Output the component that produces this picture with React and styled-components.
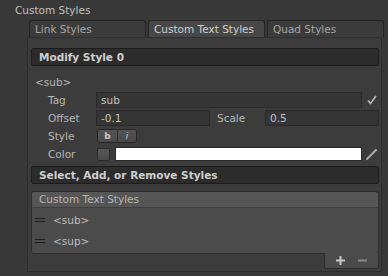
import React from "react";
import styled, { createGlobalStyle } from "styled-components";

const Global = createGlobalStyle`
  html, body { margin: 0; padding: 0; background: #383838; }
  body { font-family: "DejaVu Sans", Verdana, sans-serif; font-size: 10.5px; color: #bcbcbc; }
  * { box-sizing: border-box; }
`;

const Page = styled.div`
  width: 388px;
  height: 276px;
  background: #383838;
  padding: 3px 0 0 15px;
  display: flex;
  flex-direction: column;
  overflow: hidden;
`;

const Title = styled.div`
  height: 17px;
  line-height: 15px;
  color: #c0c0c0;
`;

const Section = styled.div`
  margin-left: 12px;
  width: 356px;
  display: flex;
  flex-direction: column;
`;

const TabBar = styled.div`
  display: flex;
  padding-left: 2px;
  gap: 2px;
  height: 17px;
`;

const Tab = styled.div`
  flex: 0 0 117px;
  height: 17px;
  padding-left: 5px;
  line-height: 16px;
  border: 1px solid #262626;
  border-bottom: none;
  border-radius: 3px 3px 0 0;
  background: ${(p) => (p.$active ? "#474747" : "#3b3b3b")};
  color: ${(p) => (p.$active ? "#cfcfcf" : "#a6a6a6")};
  white-space: nowrap;
  overflow: hidden;
`;

const Panel = styled.div`
  width: 355px;
  height: 235px;
  background: #3c3c3c;
  border: 1px solid #2c2c2c;
  border-top-color: #303030;
  padding: 10px 2px 0 3px;
  display: flex;
  flex-direction: column;
`;

const Header = styled.div`
  height: 18px;
  background: #2c2c2c;
  border: 1px solid #1c1c1c;
  border-radius: 2px;
  padding-left: 7px;
  line-height: 16px;
  font-weight: bold;
  color: #cfcfcf;
  margin-top: ${(p) => p.$mt || 0}px;
`;

const Sub = styled.div`
  height: 18px;
  margin-top: 7px;
  padding-left: 4px;
  line-height: 18px;
  color: #b6b6b6;
`;

const Row = styled.div`
  display: flex;
  align-items: center;
  height: 18px;
  padding-left: 17px;
`;

const Label = styled.div`
  width: 48px;
  margin-left: ${(p) => p.$ml || 0}px;
  color: #b6b6b6;
  flex: none;
`;

const Field = styled.div`
  width: ${(p) => p.$w}px;
  height: 16px;
  background: #353535;
  border: 1px solid #2a2a2a;
  padding-left: 4px;
  line-height: 14px;
  color: #c4c4c4;
  flex: none;
`;

const Side = styled.div`
  margin-left: 3px;
  width: 14px;
  height: 14px;
  display: flex;
  align-items: center;
  justify-content: center;
  flex: none;
`;

const BtnGroup = styled.div`
  display: flex;
  height: 14px;
  margin-left: 1px;
  border: 1px solid #262626;
  border-radius: 3px;
  overflow: hidden;
`;

const StyleBtn = styled.div`
  width: 19px;
  background: linear-gradient(#555, #484848);
  color: #c8c8c8;
  font-size: 9px;
  font-weight: ${(p) => (p.$bold ? "bold" : "normal")};
  font-style: ${(p) => (p.$italic ? "italic" : "normal")};
  text-align: center;
  line-height: 12px;
  & + & { border-left: 1px solid #2c2c2c; }
`;

const Toggle = styled.div`
  width: 13px;
  height: 13px;
  margin-left: 1px;
  border: 1px solid #2a2a2a;
  border-radius: 2px;
  background: linear-gradient(#585858, #4a4a4a);
  margin-right: 5px;
  flex: none;
`;

const Swatch = styled.div`
  width: 247px;
  height: 14px;
  background: #fff;
  border: 1px solid #2a2a2a;
  flex: none;
`;

const ListBox = styled.div`
  margin-top: 7px;
  display: flex;
  flex-direction: column;
`;

const ListHead = styled.div`
  height: 16px;
  background: #565656;
  border: 1px solid #2e2e2e;
  border-bottom: none;
  border-radius: 3px 3px 0 0;
  padding-left: 7px;
  line-height: 15px;
  color: #b4b4b4;
`;

const ListBody = styled.div`
  height: 47px;
  background: #4b4b4b;
  border: 1px solid #2e2e2e;
  border-top: 1px solid #404040;
  border-radius: 0 0 3px 3px;
  padding-top: 1px;
`;

const Item = styled.div`
  display: flex;
  align-items: center;
  height: 21px;
  color: #bebebe;
`;

const Handle = styled.div`
  width: 10px;
  height: 4px;
  margin: 0 8px 0 3px;
  border-top: 1px solid #1e1e1e;
  border-bottom: 1px solid #1e1e1e;
`;

const Footer = styled.div`
  align-self: flex-end;
  width: 55px;
  height: 16px;
  margin-top: -1px;
  background: #4b4b4b;
  border: 1px solid #2e2e2e;
  border-top: none;
  border-radius: 0 0 3px 3px;
  display: flex;
  align-items: center;
  justify-content: space-around;
  padding: 0 4px;
`;

const CheckIcon = () => (
  <svg width="12" height="12" viewBox="0 0 12 12">
    <path d="M2 6.5 L4.5 9.5 L10 2" fill="none" stroke="#b8b8b8" strokeWidth="1.6" />
  </svg>
);

const Dropper = () => (
  <svg width="14" height="14" viewBox="0 0 14 14">
    <path d="M2 12 L10 4" stroke="#a8a8a8" strokeWidth="2" strokeLinecap="round" />
    <path d="M10 2.5 L11.5 4" stroke="#a8a8a8" strokeWidth="2.4" />
  </svg>
);

const Plus = () => (
  <svg width="11" height="11" viewBox="0 0 11 11">
    <path d="M5.5 1 V10 M1 5.5 H10" stroke="#c8c8c8" strokeWidth="2" />
  </svg>
);

const Minus = () => (
  <svg width="11" height="11" viewBox="0 0 11 11">
    <path d="M1 5.5 H10" stroke="#8a8a8a" strokeWidth="2" />
  </svg>
);

export default function App() {
  return (
    <>
      <Global />
      <Page>
        <Title>Custom Styles</Title>
        <Section>
          <TabBar>
            <Tab>Link Styles</Tab>
            <Tab $active>Custom Text Styles</Tab>
            <Tab>Quad Styles</Tab>
          </TabBar>
          <Panel>
            <Header>Modify Style 0</Header>
            <Sub>&lt;sub&gt;</Sub>
            <Row>
              <Label>Tag</Label>
              <Field $w={266}>sub</Field>
              <Side><CheckIcon /></Side>
            </Row>
            <Row>
              <Label>Offset</Label>
              <Field $w={114}>-0.1</Field>
              <Label $ml={7}>Scale</Label>
              <Field $w={114}>0.5</Field>
            </Row>
            <Row>
              <Label>Style</Label>
              <BtnGroup>
                <StyleBtn $bold>b</StyleBtn>
                <StyleBtn $italic>i</StyleBtn>
              </BtnGroup>
            </Row>
            <Row>
              <Label>Color</Label>
              <Toggle />
              <Swatch />
              <Side><Dropper /></Side>
            </Row>
            <Header $mt={3}>Select, Add, or Remove Styles</Header>
            <ListBox>
              <ListHead>Custom Text Styles</ListHead>
              <ListBody>
                <Item><Handle />&lt;sub&gt;</Item>
                <Item><Handle />&lt;sup&gt;</Item>
              </ListBody>
              <Footer>
                <Plus />
                <Minus />
              </Footer>
            </ListBox>
          </Panel>
        </Section>
      </Page>
    </>
  );
}
